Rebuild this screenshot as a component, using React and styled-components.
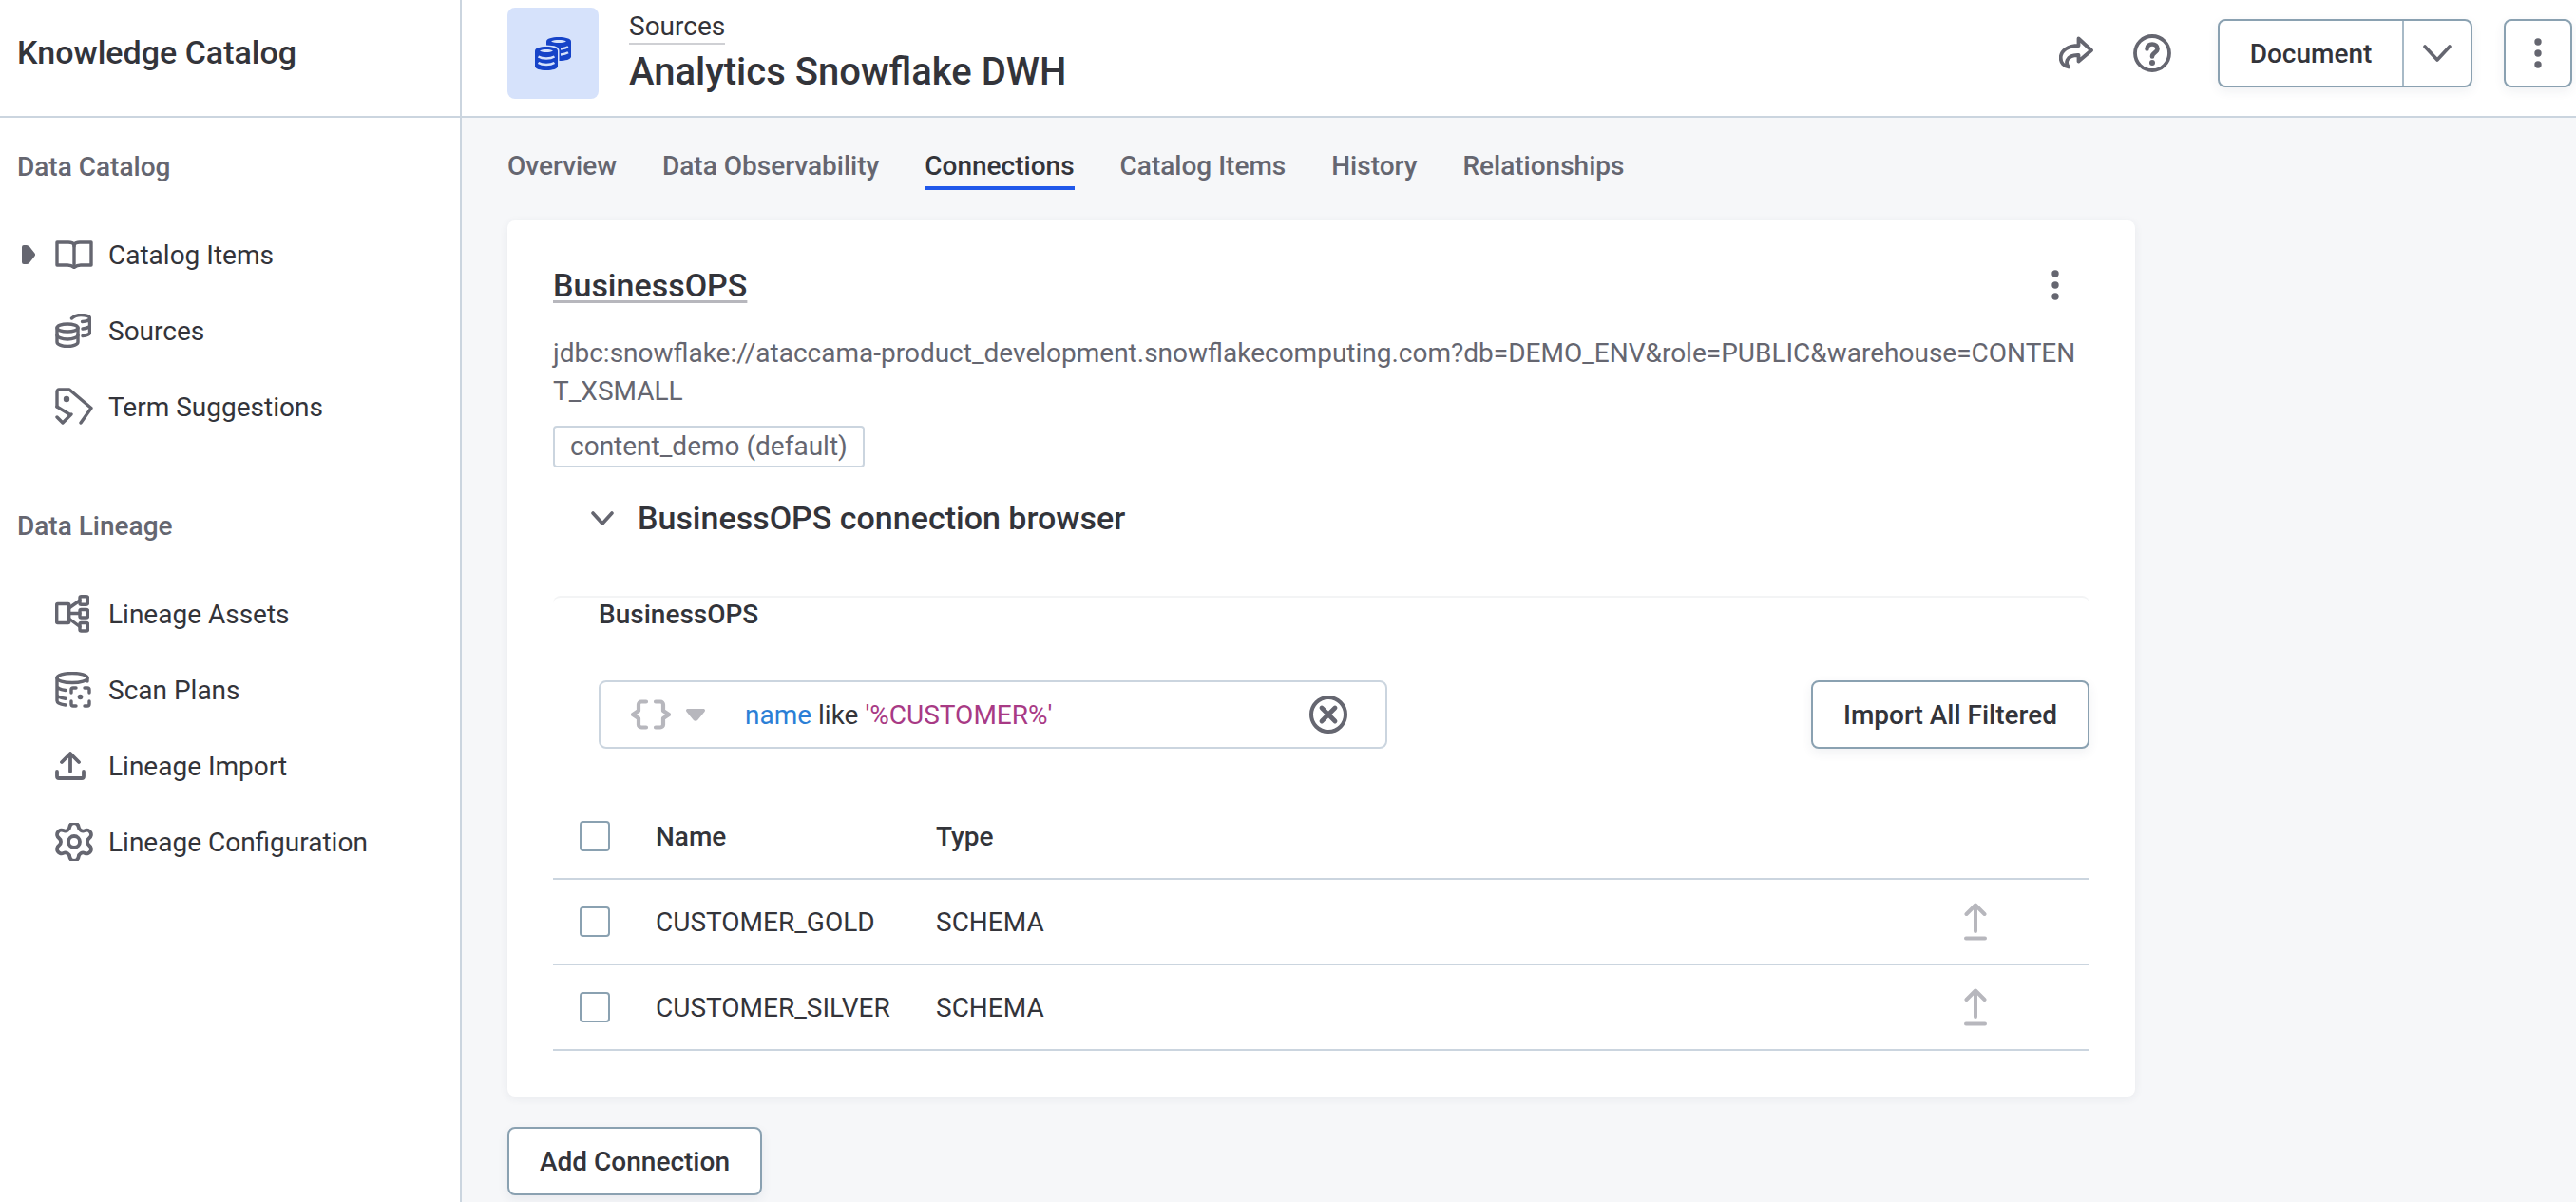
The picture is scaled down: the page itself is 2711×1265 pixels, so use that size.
import React from 'react';
import styled, { createGlobalStyle } from 'styled-components';
import { Settings } from 'lucide-react';

const INK = '#33343a';
const MUTED = '#656670';
const FAINT = '#b7b7bd';
const LINE = '#cbd5df';
const CONTROL = '#8aa1b1';
const TILE = '#d6e2fb';
const BRAND_BLUE = '#1643c8';

const Global = createGlobalStyle`
  html, body { margin: 0; padding: 0; height: 1265px; overflow: hidden; background: #f6f7f9; }
  body { font-family: Roboto, "Liberation Sans", sans-serif; color: ${INK}; }
  * { box-sizing: border-box; }
  svg { display: block; flex: none; }
`;

const Shell = styled.div`
  display: grid;
  grid-template-columns: 486px 1fr;
  height: 1265px;
`;

const Sidebar = styled.aside`
  background: #fff;
  border-right: 2px solid ${LINE};
`;

const Brand = styled.div`
  height: 124px;
  border-bottom: 2px solid ${LINE};
  display: flex;
  align-items: center;
  padding: 0 0 12px 18px;
  font-size: 34px;
  font-weight: 500;
`;

const SectionLabel = styled.div`
  margin: ${p => p.$top}px 0 0;
  padding-left: 18px;
  height: 48px;
  line-height: 48px;
  font-size: 28px;
  font-weight: 500;
  color: ${MUTED};
`;

const NavList = styled.nav`
  margin-top: 28px;
  display: flex;
  flex-direction: column;
`;

const NavRow = styled.div`
  height: 80px;
  display: grid;
  grid-template-columns: 58px 40px 1fr;
  align-items: center;
  font-size: 28px;
  color: ${INK};
`;

const Caret = styled.div`
  padding-left: 23px;
`;

const NavLabel = styled.span`
  padding-left: 16px;
`;

const Main = styled.main`
  min-width: 0;
`;

const TopBar = styled.header`
  height: 124px;
  background: #fff;
  border-bottom: 2px solid ${LINE};
  display: flex;
  align-items: flex-start;
  padding: 8px 4px 0 48px;
`;

const Tile = styled.div`
  width: 96px;
  height: 96px;
  border-radius: 8px;
  background: ${TILE};
  display: flex;
  align-items: center;
  justify-content: center;
`;

const Titles = styled.div`
  margin-left: 32px;
  padding-top: 2px;
`;

const Crumb = styled.div`
  display: table;
  height: 37px;
  line-height: 35px;
  font-size: 28px;
  border-bottom: 2px solid #cfd0d4;
`;

const PageTitle = styled.h1`
  margin: 0;
  height: 56px;
  line-height: 58px;
  font-size: 40px;
  font-weight: 500;
`;

const Actions = styled.div`
  margin-left: auto;
  padding-top: 12px;
  display: flex;
  align-items: center;
`;

const ToolIcons = styled.div`
  display: flex;
  align-items: center;
  gap: 42px;
  margin-right: 49px;
`;

const Button = styled.button`
  height: 72px;
  padding: 0 32px;
  background: #fff;
  border: 2px solid ${CONTROL};
  border-radius: 8px;
  box-shadow: 0 4px 12px rgba(40, 60, 80, 0.07);
  font: 500 28px Roboto, sans-serif;
  color: ${INK};
`;

const SplitButton = styled.div`
  display: flex;
  height: 72px;
  width: 268px;
  background: #fff;
  border: 2px solid ${CONTROL};
  border-radius: 8px;
  box-shadow: 0 4px 12px rgba(40, 60, 80, 0.07);
  margin-right: 33px;
`;

const SplitLabel = styled.div`
  width: 194px;
  display: flex;
  align-items: center;
  justify-content: center;
  font-size: 28px;
  font-weight: 500;
  border-right: 2px solid #a8bac7;
`;

const SplitCaret = styled.div`
  flex: 1;
  display: flex;
  align-items: center;
  justify-content: center;
`;

const IconButton = styled.div`
  width: 72px;
  height: 72px;
  background: #fff;
  border: 2px solid ${CONTROL};
  border-radius: 8px;
  box-shadow: 0 4px 12px rgba(40, 60, 80, 0.07);
  display: flex;
  align-items: center;
  justify-content: center;
`;

const Tabs = styled.div`
  display: flex;
  gap: 48px;
  padding: 33px 0 0 48px;
`;

const Tab = styled.div`
  height: 43px;
  line-height: 36px;
  padding-bottom: 3px;
  font-size: 28px;
  font-weight: 500;
  color: ${p => (p.$active ? INK : MUTED)};
  border-bottom: 4px solid ${p => (p.$active ? '#2058ea' : 'transparent')};
`;

const Card = styled.section`
  margin: 32px 0 0 48px;
  width: 1713px;
  height: 922px;
  padding: 44px 48px 0;
  background: #fff;
  border-radius: 8px;
  box-shadow: 0 2px 10px rgba(40, 60, 80, 0.07);
`;

const CardHead = styled.div`
  display: flex;
  align-items: center;
  justify-content: space-between;
  height: 48px;
  padding-right: 32px;
`;

const CardTitle = styled.h2`
  margin: 0;
  font-size: 34px;
  line-height: 48px;
  font-weight: 500;
  text-decoration: underline;
  text-decoration-color: ${FAINT};
  text-decoration-thickness: 3px;
  text-underline-offset: 4px;
`;

const Url = styled.div`
  margin-top: 28px;
  font-size: 28px;
  line-height: 40px;
  color: ${MUTED};
  word-break: break-all;
`;

const Tag = styled.div`
  display: table;
  margin-top: 16px;
  height: 44px;
  line-height: 40px;
  padding: 0 16px;
  font-size: 28px;
  color: ${MUTED};
  border: 2px solid ${LINE};
  border-radius: 4px;
`;

const BrowserHead = styled.div`
  margin-top: 29px;
  height: 48px;
  padding-left: 40px;
  display: flex;
  align-items: center;
  gap: 25px;
  font-size: 34px;
  font-weight: 500;
`;

const Panel = styled.div`
  margin-top: 58px;
  border-top: 2px solid #f3f4f5;
  border-radius: 8px 8px 0 0;
`;

const PanelTitle = styled.div`
  padding-left: 48px;
  height: 40px;
  line-height: 36px;
  font-size: 28px;
  font-weight: 500;
`;

const FilterRow = styled.div`
  margin-top: 47px;
  padding-left: 48px;
  display: flex;
  align-items: center;
  justify-content: space-between;
`;

const FilterInput = styled.div`
  width: 830px;
  height: 72px;
  display: flex;
  align-items: center;
  border: 2px solid ${LINE};
  border-radius: 8px;
  padding: 0 40px 0 32px;
  font-size: 28px;
`;

const FilterMode = styled.div`
  display: flex;
  align-items: center;
  gap: 16px;
  margin-right: 42px;
`;

const Query = styled.div`
  flex: 1;
  white-space: pre;
`;

const QueryPart = styled.span`
  color: ${p => p.$color};
`;

const Table = styled.div`
  margin-top: 48px;
`;

const TableRow = styled.div`
  height: 90px;
  border-bottom: 2px solid ${LINE};
  display: grid;
  grid-template-columns: 108px 295px 1fr 132px;
  align-items: center;
  font-size: 28px;
  font-weight: ${p => (p.$head ? 500 : 400)};
`;

const CheckCell = styled.div`
  padding-left: 28px;
`;

const Checkbox = styled.div`
  width: 32px;
  height: 32px;
  border: 2px solid ${CONTROL};
  border-radius: 4px;
  background: #fff;
`;

const AddRow = styled.div`
  margin: 32px 0 0 48px;
`;

const Stroke = ({ w, h, box, color = MUTED, sw = 3.6, children }) => (
  <svg width={w} height={h} viewBox={box || `0 0 ${w} ${h}`} fill="none" stroke={color} strokeWidth={sw} strokeLinecap="round" strokeLinejoin="round">
    {children}
  </svg>
);

const BookIcon = () => (
  <Stroke w={40} h={30} sw={3.4}>
    <path d="M2 2h12c3 0 6 1 6 4 0-3 3-4 6-4h12v24H27c-2.500 0-5 .8-7 2.500-2-1.700-4.500-2.500-7-2.500H2z" />
    <path d="M20 6v22" />
  </Stroke>
);

const SourcesIcon = () => (
  <Stroke w={38} h={36} sw={3.4}>
    <ellipse cx="13" cy="15" rx="11" ry="4" />
    <path d="M2 15v15c0 2.500 5 4.500 11 4.500s11-2 11-4.500V15" />
    <path d="M2 22.500c0 2.500 5 4.500 11 4.500s11-2 11-4.500" />
    <path d="M17.500 5c2-2 5.500-3.500 9.500-3.500 5.500 0 9.500 1.500 9.500 3.500 0 1.800-3.500 3.300-8 3.500M36.500 5v15c0 1.500-3 3-7.500 3.500M36.500 12.500c0 1.500-3 3-7.500 3.500" />
  </Stroke>
);

const TileIcon = () => (
  <svg width="38" height="35" viewBox="0 0 38 35">
    <path d="M12 4.500C12 1.500 18 0 25 0s13 1.500 13 4.500v16c0 3-6 4.500-13 4.500s-13-1.500-13-4.500z" fill={BRAND_BLUE} />
    <path d="M17 4.500c2-1.200 5-1.500 8-1.500s6 .3 8 1.500c-2 1.200-5 1.500-8 1.500s-6-.3-8-1.500z" fill={TILE} />
    <path d="M27 12.500c3-.2 6-1 8-2.200M27 18.500c3-.2 6-1 8-2.200" stroke={TILE} strokeWidth="2.400" fill="none" />
    <path d="M0 14.500C0 11.500 5.500 10 12 10s12 1.500 12 4.500v16c0 3-5.500 4.500-12 4.500S0 33.500 0 30.500z" fill={BRAND_BLUE} stroke={TILE} strokeWidth="3" paintOrder="stroke" />
    <path d="M5 14.500c2-1.200 4.500-1.500 7-1.500s5 .3 7 1.500c-2 1.200-4.500 1.500-7 1.500s-5-.3-7-1.500z" fill={TILE} />
    <path d="M3.500 20.500c2.500 1.500 5.500 2 8.500 2s6-.5 8.500-2M3.500 27c2.500 1.500 5.500 2 8.500 2s6-.5 8.500-2" stroke={TILE} strokeWidth="2.400" fill="none" />
  </svg>
);

const TagCheckIcon = () => (
  <Stroke w={40} h={40} sw={3.4}>
    <path d="M2 20V4a2 2 0 0 1 2-2h11l23 19.500L27 37" />
    <path d="M2 20l13 8" />
    <path d="M2 31l6 6 9-9" />
    <circle cx="12" cy="12" r="3.200" fill={MUTED} stroke="none" />
  </Stroke>
);

const LineageIcon = () => (
  <Stroke w={36} h={40} sw={3.4}>
    <rect x="1.700" y="9.500" width="13" height="20" rx="1" />
    <rect x="26" y="1.700" width="8.500" height="8.500" rx="1.500" />
    <rect x="26" y="15.500" width="8.500" height="8.500" rx="1.500" />
    <rect x="26" y="29.500" width="8.500" height="8.500" rx="1.500" />
    <path d="M14.500 14L26 6M14.500 19.500H26M14.500 25L26 33.500" />
  </Stroke>
);

const ScanIcon = () => (
  <Stroke w={38} h={38} sw={3.4}>
    <ellipse cx="18" cy="6.500" rx="16" ry="5" />
    <path d="M2 6.500v24c0 2 3.500 3.700 9 4.500M2 15c0 2 3.500 3.800 9 4.500M2 24c0 2 3.500 3.500 9 4.300M34 6.500V10" />
    <path d="M17 22v-3a2 2 0 0 1 2-2h3M31 17h3a2 2 0 0 1 2 2v3M36 31v3a2 2 0 0 1-2 2h-3M22 36h-3a2 2 0 0 1-2-2v-3" />
    <circle cx="26.500" cy="26.500" r="2.800" fill={MUTED} stroke="none" />
  </Stroke>
);

const UploadTrayIcon = () => (
  <Stroke w={32} h={30} sw={3.8}>
    <path d="M16 3v18M7 11l9-9 9 9" />
    <path d="M2 21v5a2 2 0 0 0 2 2h24a2 2 0 0 0 2-2v-5" />
  </Stroke>
);

const CaretRight = () => (
  <svg width="14" height="20" viewBox="0 0 14 20">
    <path d="M2 0h3c1 0 2 .5 3 1.500l5.500 7c.8 1 .8 2 0 3L8 18.500c-1 1-2 1.500-3 1.500H2a2 2 0 0 1-2-2V2a2 2 0 0 1 2-2z" fill={MUTED} />
  </svg>
);

const ShareIcon = () => (
  <Stroke w={36} h={36} sw={3.8}>
    <path d="M20.500 2.500L34 15 20.500 26.500v-6.500c-5.500-.2-10 1.500-11.800 5-1.200 2.500-.8 5 1.300 7.500-5-1-8.300-4.700-8.300-9.500 0-8 8-13 18.800-13z" />
  </Stroke>
);

const HelpIcon = () => (
  <Stroke w={40} h={40} sw={3.8}>
    <circle cx="20" cy="20" r="18" />
    <path d="M14.500 15.500c0-3.200 2.400-5 5.500-5s5.500 1.800 5.500 4.800c0 4.200-5.500 4-5.500 8.200" strokeWidth="4.600" />
    <circle cx="20" cy="30" r="3" fill={MUTED} stroke="none" />
  </Stroke>
);

const ChevronDown = ({ w, h, sw }) => (
  <Stroke w={w} h={h} sw={sw}>
    <path d={`M2 2L${w / 2} ${h - 2}L${w - 2} 2`} />
  </Stroke>
);

const KebabIcon = () => (
  <svg width="8" height="32" viewBox="0 0 8 32" fill={MUTED}>
    <circle cx="4" cy="4" r="3.700" />
    <circle cx="4" cy="16" r="3.700" />
    <circle cx="4" cy="28" r="3.700" />
  </svg>
);

const BracesIcon = () => (
  <Stroke w={42} h={32} color={FAINT} sw={4.2}>
    <path d="M16 2.500h-5a3 3 0 0 0-3 3V12l-6 4 6 4v6.500a3 3 0 0 0 3 3h5" />
    <path d="M26 2.500h5a3 3 0 0 1 3 3V12l6 4-6 4v6.500a3 3 0 0 1-3 3h-5" />
  </Stroke>
);

const FilterCaret = () => (
  <svg width="20" height="13" viewBox="0 0 20 13">
    <path d="M2 0h16c2 0 2.500 1.500 1.500 3l-7 8.500c-1.300 1.700-3.700 1.700-5 0L.5 3C-.5 1.500 0 0 2 0z" fill={FAINT} />
  </svg>
);

const ClearIcon = () => (
  <Stroke w={40} h={40} sw={4}>
    <circle cx="20" cy="20" r="18" />
    <path d="M13 13l14 14M27 13L13 27" strokeWidth="4.800" />
  </Stroke>
);

const ImportIcon = () => (
  <Stroke w={24} h={40} color={FAINT} sw={4}>
    <path d="M12 3v27M2.500 12L12 2.500 21.500 12" />
    <path d="M2 37.500h20" />
  </Stroke>
);

const catalogNav = [
  { label: 'Catalog Items', icon: <BookIcon />, caret: true },
  { label: 'Sources', icon: <SourcesIcon /> },
  { label: 'Term Suggestions', icon: <TagCheckIcon /> },
];

const lineageNav = [
  { label: 'Lineage Assets', icon: <LineageIcon /> },
  { label: 'Scan Plans', icon: <ScanIcon /> },
  { label: 'Lineage Import', icon: <UploadTrayIcon /> },
  { label: 'Lineage Configuration', icon: <Settings size={40} viewBox="2 2 20 20" color={MUTED} strokeWidth={1.9} /> },
];

const tabs = ['Overview', 'Data Observability', 'Connections', 'Catalog Items', 'History', 'Relationships'];
const schemas = ['CUSTOMER_GOLD', 'CUSTOMER_SILVER'];

const NavItems = ({ items }) => (
  <NavList>
    {items.map(item => (
      <NavRow key={item.label}>
        <Caret>{item.caret && <CaretRight />}</Caret>
        {item.icon}
        <NavLabel>{item.label}</NavLabel>
      </NavRow>
    ))}
  </NavList>
);

export default function App() {
  return (
    <>
      <Global />
      <Shell>
        <Sidebar>
          <Brand>Knowledge Catalog</Brand>
          <SectionLabel $top={28}>Data Catalog</SectionLabel>
          <NavItems items={catalogNav} />
          <SectionLabel $top={62}>Data Lineage</SectionLabel>
          <NavItems items={lineageNav} />
        </Sidebar>
        <Main>
          <TopBar>
            <Tile><TileIcon /></Tile>
            <Titles>
              <Crumb>Sources</Crumb>
              <PageTitle>Analytics Snowflake DWH</PageTitle>
            </Titles>
            <Actions>
              <ToolIcons>
                <ShareIcon />
                <HelpIcon />
              </ToolIcons>
              <SplitButton>
                <SplitLabel>Document</SplitLabel>
                <SplitCaret><ChevronDown w={30} h={18} sw={3.6} /></SplitCaret>
              </SplitButton>
              <IconButton><KebabIcon /></IconButton>
            </Actions>
          </TopBar>
          <Tabs>
            {tabs.map(t => <Tab key={t} $active={t === 'Connections'}>{t}</Tab>)}
          </Tabs>
          <Card>
            <CardHead>
              <CardTitle>BusinessOPS</CardTitle>
              <KebabIcon />
            </CardHead>
            <Url>jdbc:snowflake://ataccama-product_development.snowflakecomputing.com?db=DEMO_ENV&amp;role=PUBLIC&amp;warehouse=CONTENT_XSMALL</Url>
            <Tag>content_demo (default)</Tag>
            <BrowserHead>
              <ChevronDown w={24} h={15} sw={3.6} />
              BusinessOPS connection browser
            </BrowserHead>
            <Panel>
              <PanelTitle>BusinessOPS</PanelTitle>
              <FilterRow>
                <FilterInput>
                  <FilterMode><BracesIcon /><FilterCaret /></FilterMode>
                  <Query>
                    <QueryPart $color="#2b7fd6">name</QueryPart>
                    <QueryPart $color={INK}> like </QueryPart>
                    <QueryPart $color="#a83a85">'%CUSTOMER%'</QueryPart>
                  </Query>
                  <ClearIcon />
                </FilterInput>
                <Button>Import All Filtered</Button>
              </FilterRow>
            </Panel>
            <Table>
              <TableRow $head>
                <CheckCell><Checkbox /></CheckCell>
                <div>Name</div>
                <div>Type</div>
                <div />
              </TableRow>
              {schemas.map(name => (
                <TableRow key={name}>
                  <CheckCell><Checkbox /></CheckCell>
                  <div>{name}</div>
                  <div>SCHEMA</div>
                  <ImportIcon />
                </TableRow>
              ))}
            </Table>
          </Card>
          <AddRow><Button>Add Connection</Button></AddRow>
        </Main>
      </Shell>
    </>
  );
}
